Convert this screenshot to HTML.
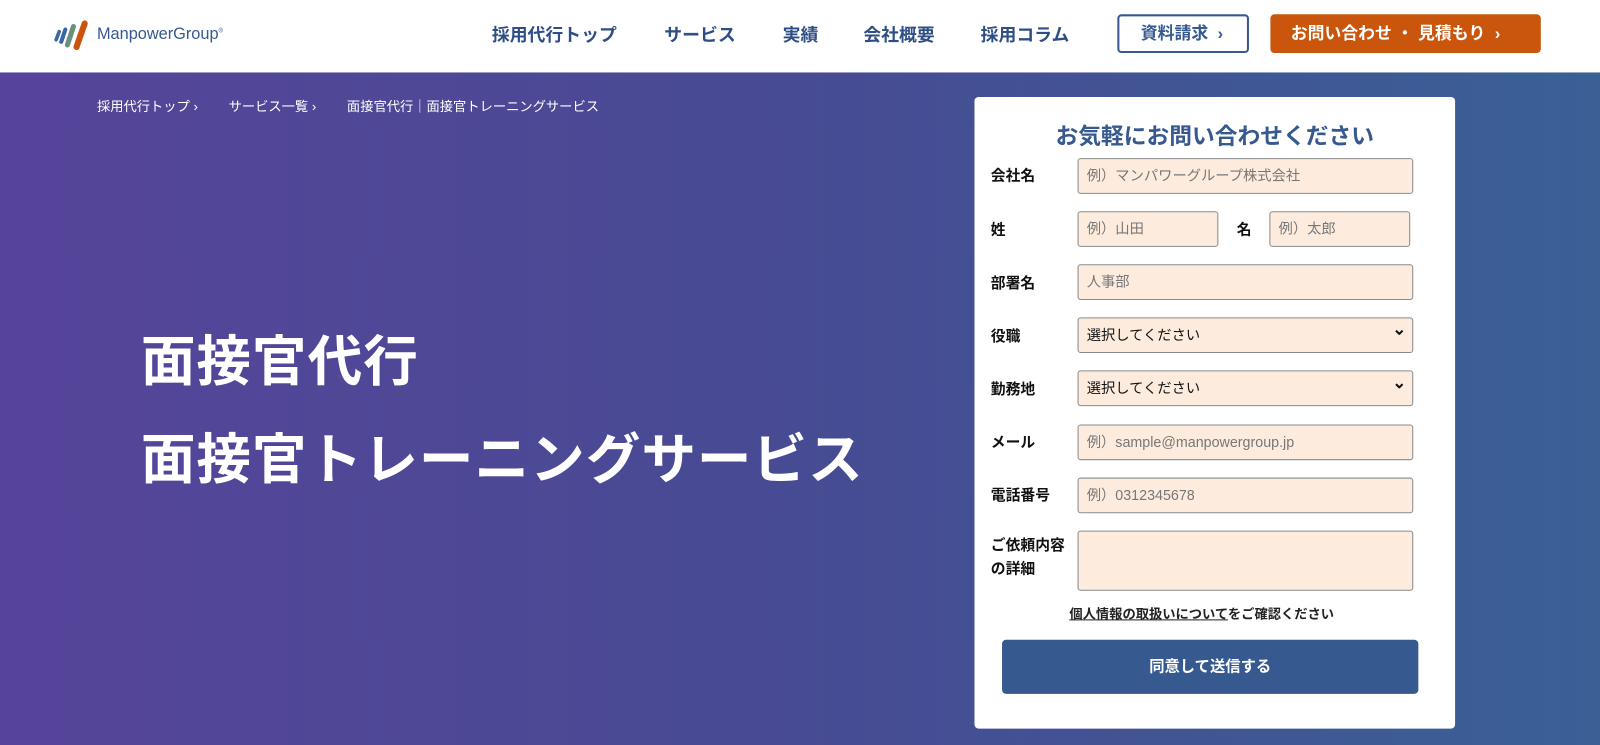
<!DOCTYPE html>
<html><head><meta charset="utf-8"><style>
*{box-sizing:border-box;margin:0;padding:0}
html,body{width:1600px;height:745px;overflow:hidden}
body{font-family:"Liberation Sans","Noto Sans CJK JP",sans-serif;background:linear-gradient(90deg,#56449a 0%,#474b93 50%,#3a6096 100%);position:relative}
.wrap{position:absolute;left:0;top:0;width:1568px;height:730px;transform:scale(1.0204);transform-origin:0 0}
.hdr{position:absolute;left:0;top:0;width:1568px;height:71px;background:#fff}
.nav{position:absolute;top:21px;font-size:17.5px;font-weight:bold;color:#2e4e85}
.btn1{position:absolute;left:1095px;top:14px;width:129px;height:38px;border:2px solid #36598f;border-radius:4px;color:#36598f;font-weight:bold;font-size:16.5px;line-height:34px;padding-left:21px}
.btn2{position:absolute;left:1245px;top:14px;width:265px;height:38px;background:#c9560c;border-radius:4px;color:#fff;font-weight:bold;font-size:16.5px;line-height:38px;padding-left:20px}
.bc{position:absolute;top:94px;color:#fff;font-size:13px}
.h1{position:absolute;left:138px;color:#fff;font-weight:bold;font-size:53.5px;letter-spacing:1px}
.card{position:absolute;left:955px;top:95px;width:471px;height:619px;background:#fff;border-radius:4px}
.ttl{position:absolute;left:0;width:471px;top:21px;text-align:center;color:#36598f;font-weight:bold;font-size:22.3px}
.lb{position:absolute;left:16px;font-size:14.5px;font-weight:bold;color:#111}
.in{position:absolute;height:35px;background:#fdecdd;border:1px solid #8a8a8a;border-radius:3px;font-size:14px;color:#777;line-height:33px;padding-left:8px}
.sel{color:#111}
.sel:after{content:"⌄";position:absolute;right:6px;top:-5px;font-size:16px;font-weight:bold}
.sub{position:absolute;left:27px;top:532px;width:408px;height:53px;background:#36598f;border-radius:4px;color:#fff;font-weight:bold;font-size:15px;text-align:center;line-height:53px}
</style></head><body><div class="wrap">
<div class="hdr">
<svg style="position:absolute;left:53px;top:18px" width="38" height="32" viewBox="0 0 38 32"><g stroke-linecap="round" fill="none"><path d="M5 13 L2 21" stroke="#3a66a8" stroke-width="3.5"/><path d="M11 11 L7 23" stroke="#3a66a8" stroke-width="4"/><path d="M19 8 L13 26" stroke="#6a8f7d" stroke-width="5"/><path d="M30 5 L22 28" stroke="#c9560c" stroke-width="6"/></g></svg>
<div style="position:absolute;left:95px;top:25px;font-size:16px;color:#36598f">ManpowerGroup<sup style="font-size:6px">®</sup></div>
<div class="nav" style="left:482px">採用代行トップ</div>
<div class="nav" style="left:651px">サービス</div>
<div class="nav" style="left:767px">実績</div>
<div class="nav" style="left:846px">会社概要</div>
<div class="nav" style="left:961px">採用コラム</div>
<div class="btn1">資料請求 &nbsp;›</div>
<div class="btn2">お問い合わせ ・ 見積もり &nbsp;›</div>
</div>
<div class="bc" style="left:95px">採用代行トップ ›</div>
<div class="bc" style="left:224px">サービス一覧 ›</div>
<div class="bc" style="left:340px">面接官代行｜面接官トレーニングサービス</div>
<div class="h1" style="top:312px">面接官代行</div>
<div class="h1" style="top:408px">面接官トレーニングサービス</div>
<div class="card">
<div class="ttl">お気軽にお問い合わせください</div>
<div class="lb" style="top:66px">会社名</div><div class="in" style="left:101px;top:60px;width:329px">例）マンパワーグループ株式会社</div>
<div class="lb" style="top:119px">姓</div><div class="in" style="left:101px;top:112px;width:138px">例）山田</div>
<div class="lb" style="left:257px;top:119px">名</div><div class="in" style="left:289px;top:112px;width:138px">例）太郎</div>
<div class="lb" style="top:171px">部署名</div><div class="in" style="left:101px;top:164px;width:329px">人事部</div>
<div class="lb" style="top:223px">役職</div><div class="in sel" style="left:101px;top:216px;width:329px">選択してください</div>
<div class="lb" style="top:275px">勤務地</div><div class="in sel" style="left:101px;top:268px;width:329px">選択してください</div>
<div class="lb" style="top:327px">メール</div><div class="in" style="left:101px;top:321px;width:329px">例）sample@manpowergroup.jp</div>
<div class="lb" style="top:379px">電話番号</div><div class="in" style="left:101px;top:373px;width:329px">例）0312345678</div>
<div class="lb" style="top:429px;line-height:23px">ご依頼内容<br>の詳細</div><div class="in" style="left:101px;top:425px;width:329px;height:59px"></div>
<div style="position:absolute;left:93px;top:496px;font-size:13px;font-weight:bold;color:#222"><u>個人情報の取扱いについて</u>をご確認ください</div>
<div class="sub">同意して送信する</div>
</div>
</div></body></html>
